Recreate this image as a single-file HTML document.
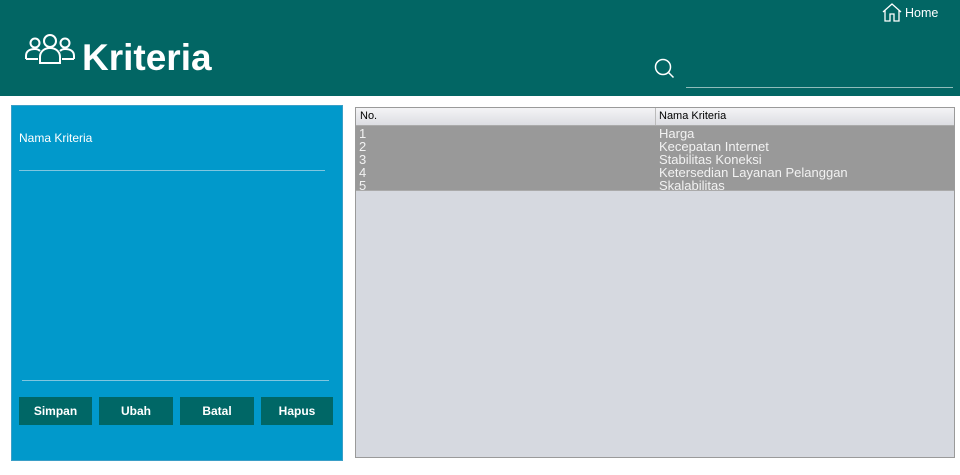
<!DOCTYPE html>
<html><head><style>
body{margin:0;width:960px;height:475px;background:#fff;position:relative;overflow:hidden;font-family:"Liberation Sans",sans-serif}
.a{position:absolute}
.hdr{left:0;top:0;width:960px;height:96px;background:#026664}
.btn{position:absolute;top:397px;height:28px;background:#006766;color:#fff;font-weight:bold;font-size:12px;text-align:center;line-height:28px}
.row{position:absolute;left:0;width:598px;height:13px;font-size:13px;color:#f2f2f2;line-height:13px}
</style></head><body>
<div class="a hdr"></div>
<svg class="a" style="left:24px;top:33px" width="52" height="36" viewBox="0 0 52 36" fill="none" stroke="#fff" stroke-width="2">
<circle cx="26" cy="8" r="6"/><path d="M16 30v-6c0-6 5-9 10-9s10 3 10 9v6z"/>
<circle cx="11" cy="10" r="4.5"/><path d="M2 26v-3c0-5 4-7 9-7 2 0 4 1 5 2"/>
<circle cx="41" cy="10" r="4.5"/><path d="M50 26v-3c0-5-4-7-9-7-2 0-4 1-5 2"/><path d="M2 26h12M50 26h-12"/>
</svg>
<div class="a" style="left:82px;top:36px;color:#fff;font-weight:bold;font-size:37px;line-height:44px">Kriteria</div>
<svg class="a" style="left:882px;top:3px" width="20" height="19" viewBox="0 0 20 19" fill="none" stroke="#fff" stroke-width="1.3"><path d="M1 9L10 1l9 8M3 7v11h5v-7h4v7h5V7"/></svg>
<div class="a" style="left:905px;top:6px;color:#fff;font-size:12.5px">Home</div>
<svg class="a" style="left:653px;top:58px" width="24" height="22" viewBox="0 0 24 22" fill="none" stroke="#fff" stroke-width="1.5"><circle cx="10" cy="9" r="7.5"/><path d="M15.5 14.5l5 5"/></svg>
<div class="a" style="left:686px;top:87px;width:267px;height:1px;background:#8fbcba"></div>

<div class="a" style="left:11px;top:105px;width:330px;height:354px;background:#0199cb;border:1px solid #3a9fc7"></div>
<div class="a" style="left:19px;top:131px;color:#fff;font-size:12px">Nama Kriteria</div>
<div class="a" style="left:19px;top:170px;width:306px;height:1px;background:#7fc6e0"></div>
<div class="a" style="left:22px;top:380px;width:307px;height:1px;background:#7fc6e0"></div>
<div class="btn" style="left:19px;width:73px">Simpan</div>
<div class="btn" style="left:99px;width:74px">Ubah</div>
<div class="btn" style="left:180px;width:74px">Batal</div>
<div class="btn" style="left:261px;width:72px">Hapus</div>

<div class="a" style="left:355px;top:107px;width:598px;height:349px;background:#d6d9e0;border:1px solid #9a9a9a">
<div class="a" style="left:0;top:0;width:598px;height:17px;background:linear-gradient(#f4f4f6,#dcdde2);border-bottom:1px solid #aaa;font-size:11px;line-height:17px">
<span class="a" style="left:4px">No.</span><span class="a" style="left:299px;top:0;height:17px;border-left:1px solid #bbb"></span><span class="a" style="left:303px">Nama Kriteria</span></div>
<div class="a" style="left:0;top:18px;width:598px;height:64px;background:#999;border-bottom:1px solid #aaa"></div>
<div class="row" style="top:19px"><span class="a" style="left:3px">1</span><span class="a" style="left:303px">Harga</span></div>
<div class="row" style="top:32px"><span class="a" style="left:3px">2</span><span class="a" style="left:303px">Kecepatan Internet</span></div>
<div class="row" style="top:45px"><span class="a" style="left:3px">3</span><span class="a" style="left:303px">Stabilitas Koneksi</span></div>
<div class="row" style="top:58px"><span class="a" style="left:3px">4</span><span class="a" style="left:303px">Ketersedian Layanan Pelanggan</span></div>
<div class="row" style="top:71px"><span class="a" style="left:3px">5</span><span class="a" style="left:303px">Skalabilitas</span></div>
</div>
</body></html>
